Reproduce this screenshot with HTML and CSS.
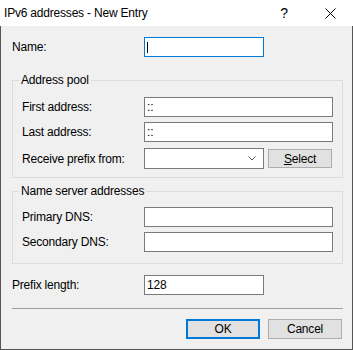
FILE: index.html
```html
<!DOCTYPE html>
<html lang="en">
<head>
    <meta charset="UTF-8">
    <title>IPv6 addresses - New Entry</title>
    <link rel="stylesheet" href="styles.css">
</head>
<body>
    <div class="dialog">
        <div class="titlebar">
            <span class="title">IPv6 addresses - New Entry</span>
            <span class="tb-btn help">?</span>
            <span class="tb-btn close">
                <svg width="11" height="11" viewBox="0 0 11 11">
                    <path d="M0.5 0.5 L10.5 10.5 M10.5 0.5 L0.5 10.5" stroke="#000" stroke-width="1" fill="none"/>
                </svg>
            </span>
        </div>

        <div class="content">
            <div class="row outer">
                <label>Name:</label>
                <div class="textbox short focused"><span class="caret"></span></div>
            </div>

            <!-- Address pool -->
            <fieldset class="group pool">
                <legend>Address pool</legend>
                <div class="row">
                    <label>First address:</label>
                    <div class="textbox">::</div>
                </div>
                <div class="row">
                    <label>Last address:</label>
                    <div class="textbox">::</div>
                </div>
                <div class="row combo-row">
                    <label>Receive prefix from:</label>
                    <div class="combobox">
                        <svg class="chevron" width="8" height="5" viewBox="0 0 8 5">
                            <polyline points="0.5,0.5 4,4 7.5,0.5" stroke="#5a5a5a" stroke-width="1" fill="none"/>
                        </svg>
                    </div>
                    <button class="btn select"><u>S</u>elect</button>
                </div>
            </fieldset>

            <!-- Name servers -->
            <fieldset class="group dns">
                <legend>Name server addresses</legend>
                <div class="row">
                    <label>Primary DNS:</label>
                    <div class="textbox"></div>
                </div>
                <div class="row">
                    <label>Secondary DNS:</label>
                    <div class="textbox"></div>
                </div>
            </fieldset>

            <div class="row outer prefix">
                <label>Prefix length:</label>
                <div class="textbox short">128</div>
            </div>

            <div class="separator"></div>

            <div class="buttons">
                <button class="btn default">OK</button>
                <button class="btn">Cancel</button>
            </div>
        </div>
    </div>
</body>
</html>
```

FILE: styles.css
```css
body {
    margin: 0;
    font-family: 'Liberation Sans', Arial, sans-serif;
    font-size: 12px;
    letter-spacing: -0.2px;
    color: #000;
    background: #fff;
}

.dialog {
    width: 353px;
    height: 350px;
    box-sizing: border-box;
    border: 1px solid #555;
    border-top: none;
    background: #f0f0f0;
    display: flex;
    flex-direction: column;
}

/* Title bar */
.titlebar {
    height: 26px;
    background: #fff;
    display: flex;
    align-items: center;
    margin: 0 -1px;
}

.title {
    flex: 1;
    padding-left: 4px;
    font-size: 12px;
}

.tb-btn {
    width: 46px;
    height: 26px;
    display: flex;
    align-items: center;
    justify-content: center;
}

.help {
    font-size: 14px;
}

.close svg {
    display: block;
}

/* Dialog body */
.content {
    padding: 11px 9px 10px 11px;
    display: flex;
    flex-direction: column;
}

.row {
    display: flex;
    align-items: center;
    height: 20px;
}

.row label {
    width: 122px;
    flex: none;
}

.row.outer label {
    width: 132px;
}

.textbox {
    flex: 1;
    height: 20px;
    box-sizing: border-box;
    border: 1px solid #7a7a7a;
    background: #fff;
    padding-left: 2px;
    line-height: 18px;
    position: relative;
}

.textbox.short {
    flex: none;
    width: 120px;
}

.textbox.focused {
    border-color: #0078d7;
}

.caret {
    position: absolute;
    left: 2px;
    top: 4px;
    width: 1px;
    height: 11px;
    background: #000;
}

/* Group boxes */
.group {
    margin: 0;
    border: 1px solid #dcdcdc;
    padding: 9px 9px 8px 9px;
    display: flex;
    flex-direction: column;
    gap: 5px;
    min-width: 0;
}

.group legend {
    padding: 0 2px;
    margin-left: -3px;
    line-height: 15px;
}

.pool {
    margin-top: 16px;
}

.dns {
    margin-top: 6px;
    padding-top: 8px;
    padding-bottom: 11px;
}

.combo-row {
    height: 21px;
    margin-top: 1px;
}

.combobox {
    width: 120px;
    height: 21px;
    box-sizing: border-box;
    border: 1px solid #7a7a7a;
    background: #fff;
    position: relative;
}

.chevron {
    position: absolute;
    right: 7px;
    top: 7px;
}

/* Buttons */
.btn {
    font-family: inherit;
    font-size: 12px;
    letter-spacing: inherit;
    color: #000;
    background: #e1e1e1;
    border: 1px solid #adadad;
    height: 20px;
    width: 74px;
    padding: 0;
    margin: 0;
}

.btn.select {
    width: 64px;
    height: 19px;
    margin-left: 4px;
}

.btn.default {
    border: 2px solid #0078d7;
}

.prefix {
    margin-top: 11px;
}

.separator {
    height: 1px;
    background: #a0a0a0;
    margin-top: 13px;
}

.buttons {
    margin-top: 10px;
    display: flex;
    justify-content: flex-end;
    gap: 8px;
    padding-right: 1px;
}
```
